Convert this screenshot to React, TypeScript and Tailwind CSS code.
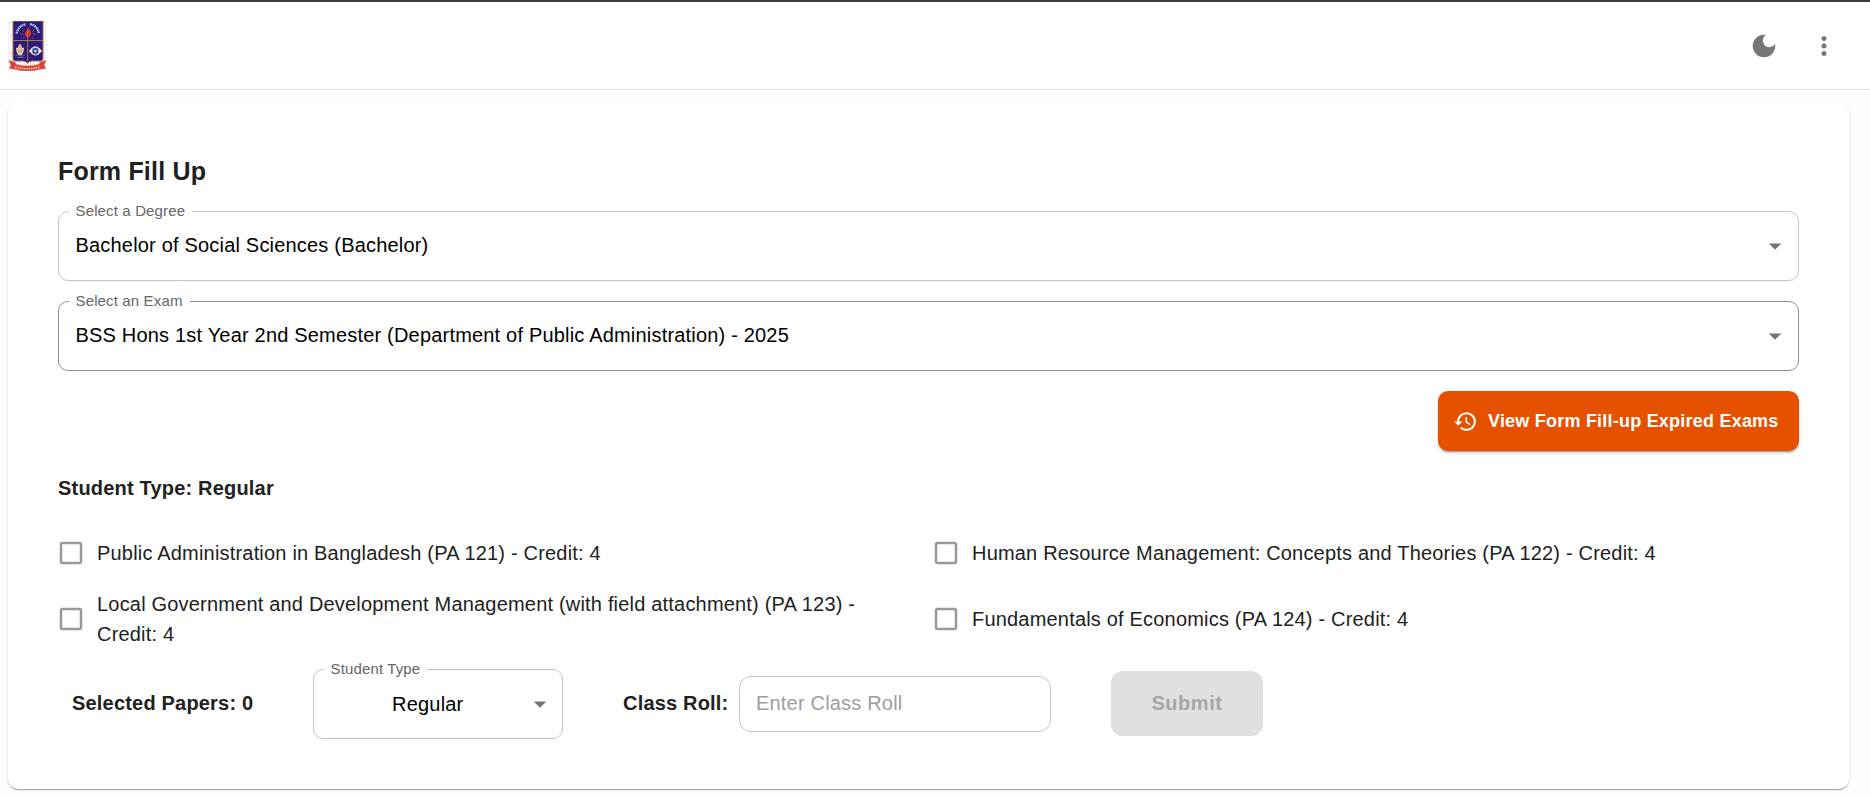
import { useState } from 'react';
import { MdArrowDropDown, MdCheckBox, MdCheckBoxOutlineBlank, MdDarkMode, MdHistory, MdMoreVert } from 'react-icons/md';

interface Paper {
  code: string;
  title: string;
  credit: number;
}

const PAPERS: Paper[] = [
  { code: 'PA 121', title: 'Public Administration in Bangladesh', credit: 4 },
  { code: 'PA 122', title: 'Human Resource Management: Concepts and Theories', credit: 4 },
  { code: 'PA 123', title: 'Local Government and Development Management (with field attachment)', credit: 4 },
  { code: 'PA 124', title: 'Fundamentals of Economics', credit: 4 },
];

interface SelectFieldProps {
  label: string;
  value: string;
  className?: string;
  centered?: boolean;
}

// Outlined select with its label set into the top border
function SelectField({ label, value, className = 'border-[#c4c4c4]', centered = false }: SelectFieldProps) {
  return (
    <fieldset className={`h-[70px] rounded-[10px] border ${className}`}>
      <legend className="ml-2.5 h-0 pr-[7px] pl-[6.5px] text-[15px] leading-[0] tracking-[0.14px] text-[#666666]">
        <span className="relative -top-px">{label}</span>
      </legend>
      <div className={`flex h-[68px] items-center pl-[16.5px] ${centered ? 'pr-[7px]' : 'pr-2'}`}>
        <span className={`flex-1 text-xl leading-[30px] tracking-[0.19px] text-black ${centered ? 'text-center' : 'pb-0.5'}`}>
          {value}
        </span>
        <MdArrowDropDown className="size-[30px] text-[#757575]" />
      </div>
    </fieldset>
  );
}

// University crest: shield with flame, lotus and eye above a ribbon
function Crest() {
  return (
    <svg className="h-[50px] w-[39px]" viewBox="0 0 39 50" fill="none">
      <rect width="39" height="50" fill="#f5f3f3" />
      <path d="M5 0h30v38q0 2-2 2H24q-3 0-4.500 2.500Q18 40 15 40H7q-2 0-2-2z" fill="#2e1a78" stroke="#a9744f" strokeWidth="1" />
      <path d="M5 19.500h30M19.700 19.500V42" stroke="#a9744f" strokeWidth="1" />
      <path d="M8.500 12.500Q11 4 18 3.200M22 3.200Q29 4 31 12.500" stroke="#a9cbe4" strokeWidth="2.200" strokeDasharray="1.800 .5" />
      <path d="M20.300 5.500c0 2.200 3 4 2.600 7.200Q22.300 16 20.300 16h-1.400Q16.800 15 17.200 12c.3-2 2.600-3 3.100-6.500z" fill="#e0402c" />
      <path d="M19.700 15.500v4" stroke="#b05a48" strokeWidth="1.200" />
      <path d="M14 9l2 1.500M26 9l-2 1.500M12.500 13h3M24.500 13h3M14.500 17.500l2-1.500M25.500 17.500l-2-1.500" stroke="#b3475a" strokeWidth=".9" />
      <path d="M8 27q1-1 2 0l.6-3 1.400-1 1.300 1 .6 3q1-1 2.100 0-.2 5-2.500 7h-3Q8.300 32 8 27z" fill="#efd3b4" />
      <path d="M12 24v8M9.700 28l1.300 4M14.300 28 13 32" stroke="#a9744f" strokeWidth=".6" />
      <path d="M7.500 34.500q2.200-1 4.500 0t4.500 0M9 36.500h6" stroke="#7187b8" strokeWidth=".8" />
      <path d="M21.200 30q6.200-9 12.600 0-6.400 8.500-12.600 0z" fill="#f3e8e3" stroke="#cfa998" strokeWidth=".6" />
      <circle cx="27.400" cy="30" r="3.200" fill="#31518f" />
      <circle cx="27.400" cy="30" r="1.200" fill="#d9dfee" />
      <path d="M1 39.500l6 1.800 1 2.200q11.500 3 23 0l1-2.200 6-1.800-2 4.500 1.500 3.500-5 .5q-13 4-26 0l-5-.5L3 44z" fill="#dc4535" stroke="#a8604b" strokeWidth=".5" />
      <path d="M7 46q12.500 3.500 25 0" stroke="#f7c4ba" strokeWidth="1.400" strokeDasharray="1.500 .8" />
    </svg>
  );
}

export default function App() {
  const [selected, setSelected] = useState<string[]>([]);
  const [classRoll, setClassRoll] = useState('');

  const togglePaper = (code: string) => {
    setSelected((prev) => (prev.includes(code) ? prev.filter((c) => c !== code) : [...prev, code]));
  };

  return (
    <div className="min-h-[795px] bg-[#fefefe] font-['Liberation_Sans',Arial,sans-serif] text-xl tracking-[0.19px] text-[#212121]">
      <header className="flex h-[90px] items-center justify-between border-t-2 border-b border-t-[#3c3c3c] border-b-[#e0e0e0] bg-white pr-[31px] pl-2">
        <Crest />
        <div className="flex items-center gap-[30px] text-[#757575]">
          <button aria-label="Toggle dark mode">
            <MdDarkMode className="size-[30px]" />
          </button>
          <button aria-label="More options">
            <MdMoreVert className="size-[30px]" />
          </button>
        </div>
      </header>

      <main className="mt-[11px] mr-[21px] ml-2 h-[688px] rounded-[10px] bg-white p-[50px] shadow-[0_2px_1px_-1px_rgba(0,0,0,0.2),0_1px_1px_0_rgba(0,0,0,0.14),0_1px_3px_0_rgba(0,0,0,0.12)]">
        <h1 className="mb-5 text-[25px] leading-10 font-bold">Form Fill Up</h1>

        <div className="flex flex-col gap-5">
          <SelectField label="Select a Degree" value="Bachelor of Social Sciences (Bachelor)" />
          <SelectField
            label="Select an Exam"
            value="BSS Hons 1st Year 2nd Semester (Department of Public Administration) - 2025"
            className="border-[#8f8f8f]"
          />
          <button className="flex h-[60px] w-[361px] items-center gap-2.5 self-end rounded-[10px] bg-[#e65100] pl-[15px] text-lg font-bold tracking-[0.22px] text-white shadow-[0_3px_1px_-2px_rgba(0,0,0,0.2),0_2px_2px_0_rgba(0,0,0,0.14),0_1px_5px_0_rgba(0,0,0,0.12)]">
            <MdHistory className="size-[25px]" />
            <span className="whitespace-nowrap">View Form Fill-up Expired Exams</span>
          </button>
        </div>

        <h2 className="mt-[22px] text-xl leading-[30px] font-bold">Student Type: Regular</h2>

        {/* Papers */}
        <div className="mt-6 grid grid-cols-2 gap-x-[9px] gap-y-2.5">
          {PAPERS.map((paper) => (
            <label key={paper.code} className="-ml-0.5 flex min-h-[52px] items-center gap-[11px] pr-10">
              <button
                role="checkbox"
                aria-checked={selected.includes(paper.code)}
                onClick={() => togglePaper(paper.code)}
                className="shrink-0 text-[#999999]"
              >
                {selected.includes(paper.code) ? (
                  <MdCheckBox className="size-[30px] text-blue-700" />
                ) : (
                  <MdCheckBoxOutlineBlank className="size-[30px]" />
                )}
              </button>
              <span className="leading-[30px]">
                {`${paper.title} (${paper.code}) - Credit: ${paper.credit}`}
              </span>
            </label>
          ))}
        </div>

        {/* Summary and submit */}
        <div className="mt-5 flex h-[70px] items-center pl-3.5">
          <p className="w-[241px] pb-0.5 font-bold">Selected Papers: {selected.length}</p>
          <div className="w-[250px]">
            <SelectField label="Student Type" value="Regular" centered />
          </div>
          <label htmlFor="classRoll" className="ml-[60px] w-[116px] pb-0.5 font-bold">
            Class Roll:
          </label>
          <input
            id="classRoll"
            type="text"
            value={classRoll}
            onChange={(e) => setClassRoll(e.target.value)}
            placeholder="Enter Class Roll"
            className="h-14 w-[312px] rounded-[12px] border border-[#c4c4c4] px-4 pb-0.5 placeholder:text-[#9e9e9e]"
          />
          <button
            disabled={selected.length === 0}
            className="mb-px ml-[60px] h-[65px] w-[152px] rounded-[12px] bg-[#e0e0e0] pb-px font-bold tracking-[0.57px] text-[#a6a6a6]"
          >
            Submit
          </button>
        </div>
      </main>
    </div>
  );
}
